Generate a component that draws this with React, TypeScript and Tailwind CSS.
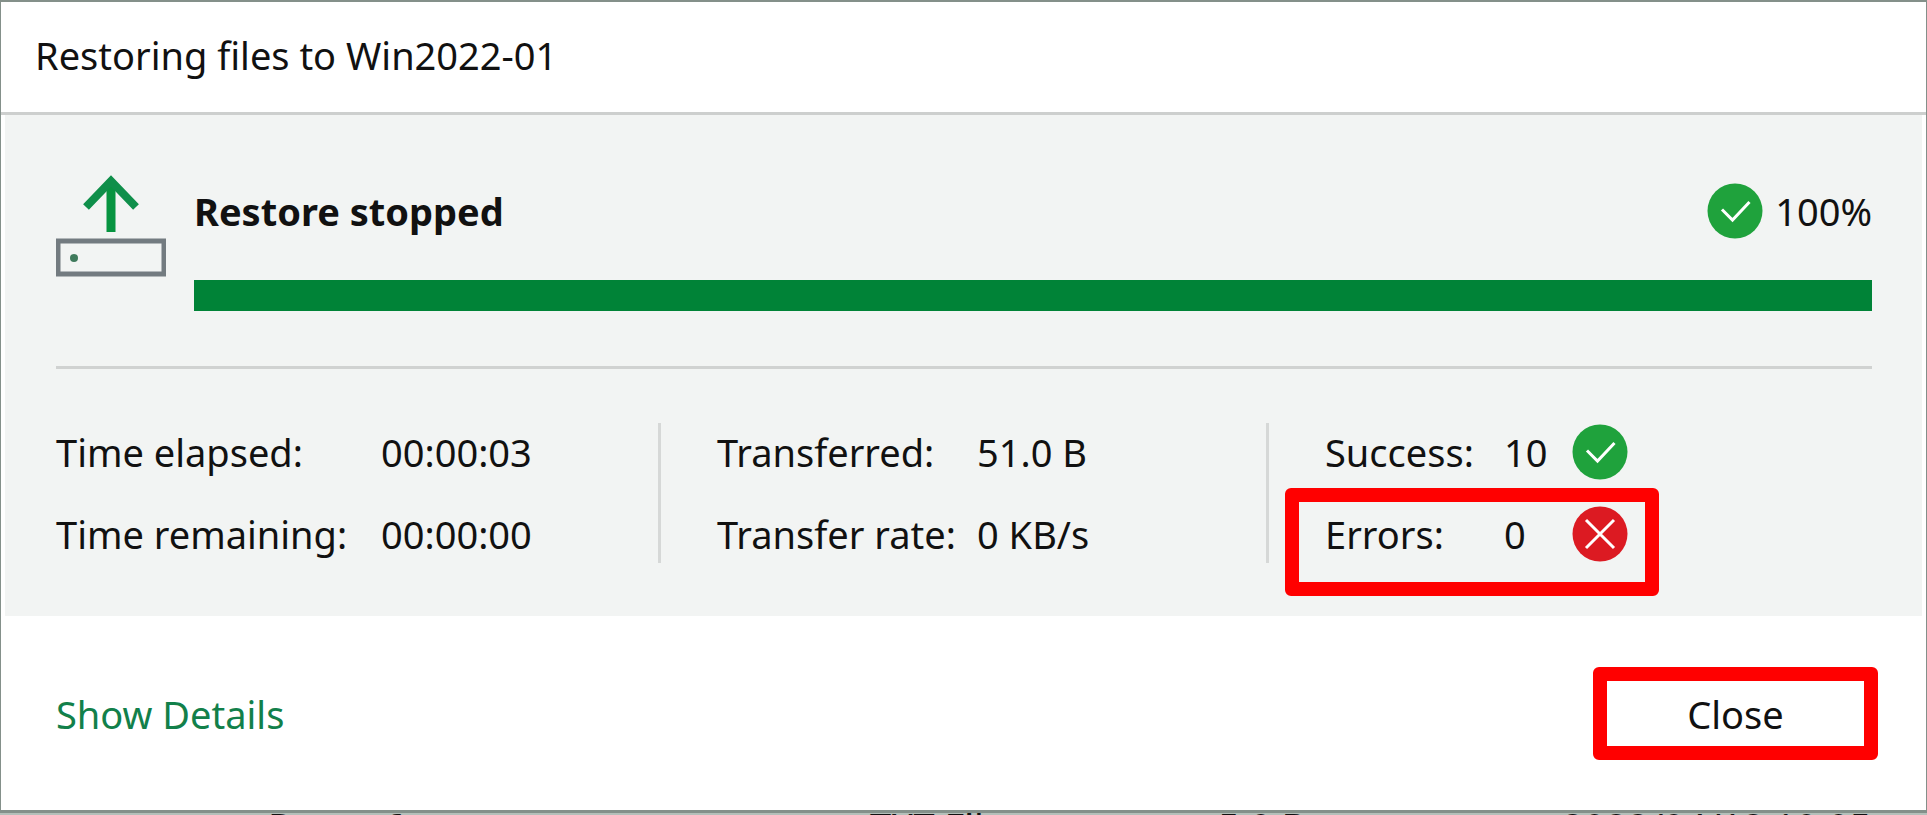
import type { ReactNode } from 'react'

type StatusIconProps = {
  kind: 'success' | 'error'
}

function StatusIcon({ kind }: StatusIconProps) {
  return (
    <svg className="h-14 w-14 shrink-0" viewBox="0 0 56 56" fill="none" aria-hidden="true">
      <circle cx="28" cy="28" r="27.5" fill={kind === 'success' ? '#1fa23c' : '#dc1a22'} />
      {kind === 'success' ? (
        <path d="M15 26.5l10.500 10.500 17-18" stroke="#fff" strokeWidth="3" />
      ) : (
        <path d="M14 14l28 28M42 14L14 42" stroke="#fff" strokeWidth="3" />
      )}
    </svg>
  )
}

function RestoreIcon() {
  return (
    <svg className="h-[104px] w-[110px] shrink-0" viewBox="0 0 110 104" fill="none" aria-hidden="true">
      <path d="M55 57V7" stroke="#079440" strokeWidth="9" />
      <path d="M30 32L55 6l25 26" stroke="#0f8f4a" strokeWidth="8" />
      <rect x="2" y="66" width="106" height="33" stroke="#737b80" strokeWidth="5" />
      <circle cx="18" cy="83" r="4" fill="#3f7a5c" />
    </svg>
  )
}

type StatProps = {
  label: string
  value: string
  labelWidth: string
  children?: ReactNode
}

function Stat({ label, value, labelWidth, children }: StatProps) {
  return (
    <div className="flex h-[82px] items-center">
      <dt className={`${labelWidth} shrink-0`}>{label}</dt>
      <dd className="flex items-center">
        {children ? <span className="w-[68px]">{value}</span> : value}
        {children}
      </dd>
    </div>
  )
}

export default function App() {
  return (
    <div className="w-full overflow-hidden bg-[#b4c0ba] font-['Noto_Sans','Open_Sans',sans-serif] text-[38px] leading-[48px] whitespace-nowrap text-[#111]">
      <div className="border-x border-t-2 border-b-3 border-[#84908a] bg-white">
        <header className="border-b-3 border-[#cdcfce] px-[34px] pt-[29px] pb-[33px]">
          <h1>Restoring files to Win2022-01</h1>
        </header>

        <main className="mx-1 bg-[#f2f4f3] pt-[60px] pr-[50px] pb-[41px] pl-[51px]">
          <section className="flex gap-7 border-b-3 border-[#d0d2d1] pb-[55px]">
            <RestoreIcon />
            <div className="min-w-0 flex-1 pt-2">
              <div className="flex h-14 items-center justify-between">
                <h2 className="font-bold">Restore stopped</h2>
                <div className="flex items-center gap-3">
                  <StatusIcon kind="success" />
                  <span>100%</span>
                </div>
              </div>
              <div
                role="progressbar"
                aria-label="Restore progress"
                aria-valuenow={100}
                className="mt-[41px] h-[31px] bg-[#008337]"
              />
            </div>
          </section>

          <section className="flex items-center pt-[42px]">
            <dl className="w-[602px] shrink-0">
              <Stat label="Time elapsed:" value="00:00:03" labelWidth="w-[325px]" />
              <Stat label="Time remaining:" value="00:00:00" labelWidth="w-[325px]" />
            </dl>
            <div className="h-[140px] w-[3px] bg-[#d6d8d7]" />
            <dl className="w-[605px] shrink-0 pl-14">
              <Stat label="Transferred:" value="51.0 B" labelWidth="w-[260px]" />
              <Stat label="Transfer rate:" value="0 KB/s" labelWidth="w-[260px]" />
            </dl>
            <div className="h-[140px] w-[3px] bg-[#d6d8d7]" />
            <dl className="relative pl-14">
              <Stat label="Success:" value="10" labelWidth="w-[179px]">
                <StatusIcon kind="success" />
              </Stat>
              <Stat label="Errors:" value="0" labelWidth="w-[179px]">
                <StatusIcon kind="error" />
              </Stat>
              <div className="absolute top-[77px] left-4 h-[108px] w-[374px] rounded-md border-[14px] border-[#ff0000]" />
            </dl>
          </section>
        </main>

        <footer className="flex items-center justify-between pt-[51px] pr-12 pb-[50px] pl-[55px]">
          <a href="#details" className="text-[#12804a]">
            Show Details
          </a>
          <button type="button" className="h-[93px] w-[285px] rounded-md border-[14px] border-[#ff0000] bg-white">
            Close
          </button>
        </footer>
      </div>

      {/* file list behind the dialog, only its top edge shows */}
      <div className="flex h-[2px] overflow-hidden pl-[268px] leading-[26px]" aria-hidden="true">
        <span className="w-[602px]">Room 6</span>
        <span className="w-[348px]">TXT File</span>
        <span className="w-[344px]">5.0 B</span>
        <span>2022/04/12 10:05</span>
      </div>
    </div>
  )
}
